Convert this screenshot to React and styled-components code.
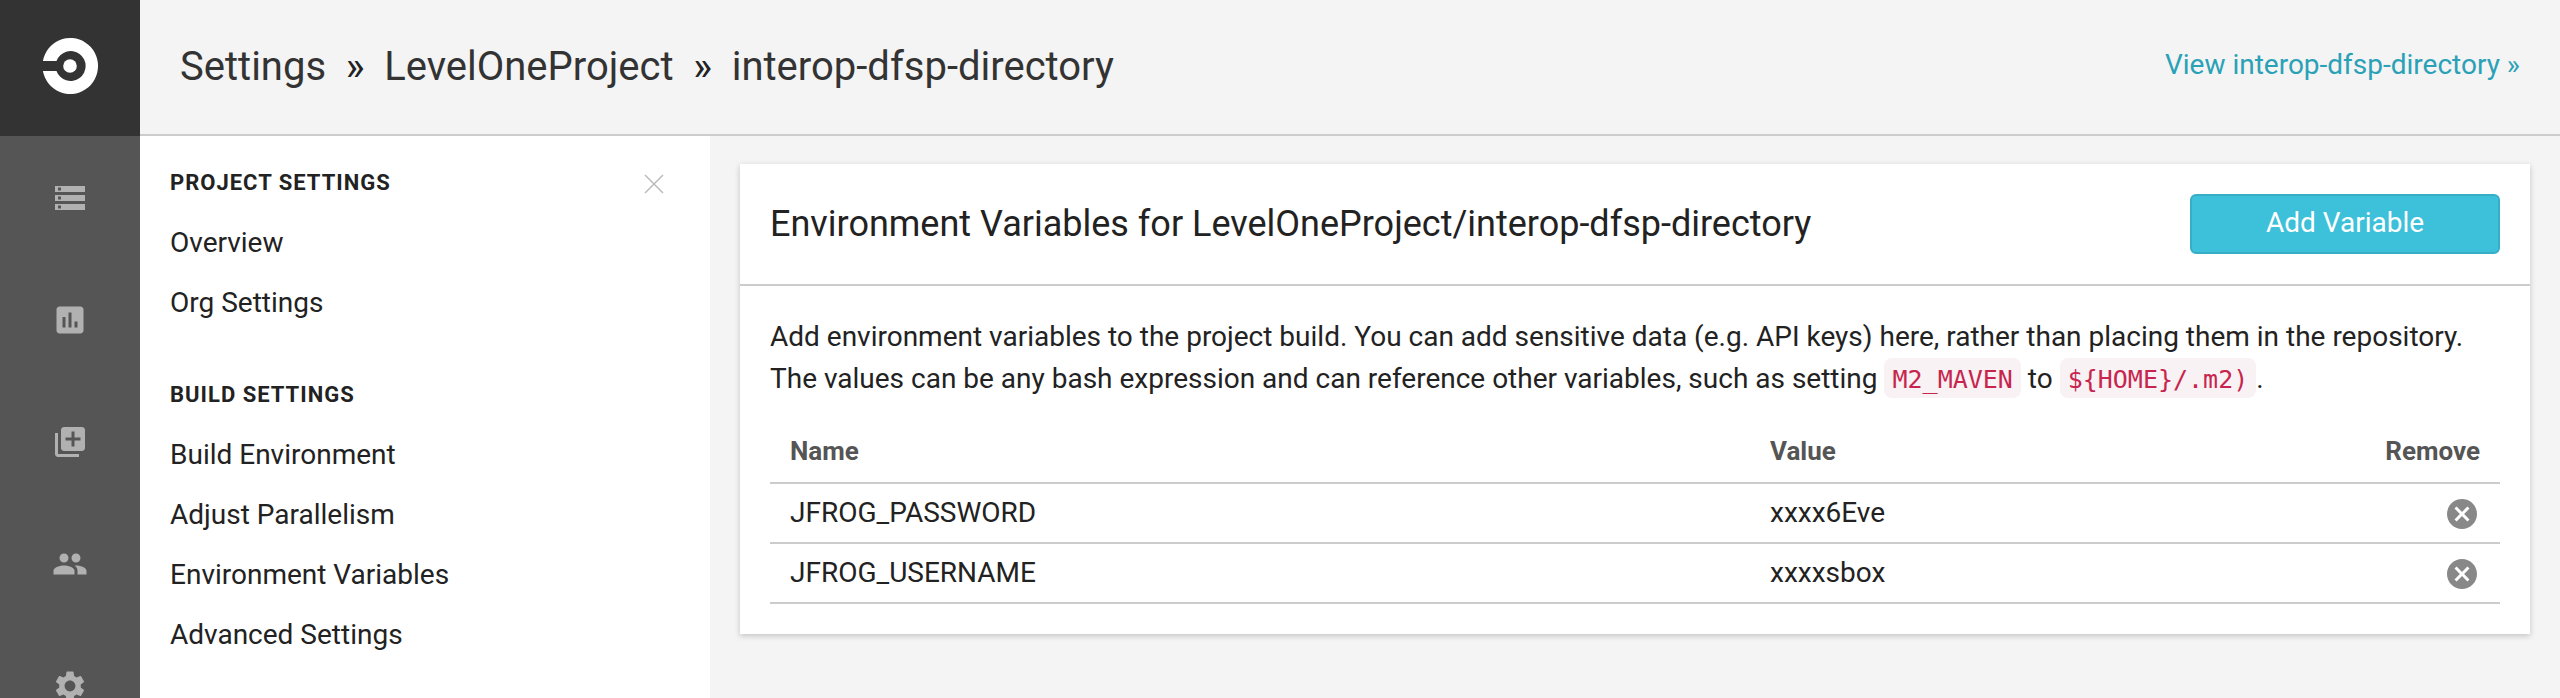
import React from "react";
import styled, { createGlobalStyle } from "styled-components";
import { MdStorage, MdAssessment, MdLibraryAdd, MdPeople, MdSettings, MdCancel } from "react-icons/md";

const GlobalStyle = createGlobalStyle`
  * { box-sizing: border-box; }
  body {
    margin: 0;
    overflow: hidden;
    background: #f4f4f4;
    color: #222;
    font-family: Roboto, "Liberation Sans", sans-serif;
    font-size: 28px;
  }
`;

const Page = styled.div`
  display: flex;
  height: 698px;
  overflow: hidden;
`;

const Rail = styled.nav`
  flex: 0 0 140px;
  height: 100%;
  overflow: hidden;
  background: #555;
`;

const LogoTile = styled.div`
  height: 136px;
  margin-bottom: 1px;
  padding: 36px 0 0 40px;
  background: #333;
`;

const RailItem = styled.a`
  display: flex;
  align-items: center;
  justify-content: center;
  height: 122px;
  color: #b1b1b1;
  font-size: 36px;
`;

const Main = styled.div`
  flex: 1;
  display: flex;
  flex-direction: column;
`;

const Header = styled.header`
  flex: none;
  display: flex;
  align-items: center;
  justify-content: space-between;
  height: 136px;
  padding: 0 40px 4px 40px;
  border-bottom: 2px solid #ccc;
`;

const Breadcrumb = styled.ol`
  display: flex;
  margin: 4px 0 0;
  padding: 0;
  list-style: none;
  font-size: 40px;
  line-height: 56px;
  color: #333;
`;

const Crumb = styled.li`
  & + &::before {
    content: "»";
    padding: 0 19.7px;
    color: #222;
  }
`;

const ViewLink = styled.a`
  margin-bottom: 1px;
  color: #2aa1b7;
`;

const Body = styled.div`
  flex: 1;
  display: flex;
  min-height: 0;
`;

const SettingsNav = styled.aside`
  flex: 0 0 570px;
  display: flex;
  align-items: flex-start;
  justify-content: space-between;
  padding: 31px 46px 0 30px;
  background: #fff;
`;

const NavSection = styled.section`
  & + & {
    margin-top: 46px;
  }
`;

const NavHeading = styled.h2`
  margin: 0;
  font-size: 22px;
  font-weight: 700;
  line-height: 31px;
  letter-spacing: 1px;
  text-transform: uppercase;
  padding-bottom: 15px;
`;

const NavLink = styled.a`
  display: block;
  height: 60px;
  line-height: 60px;
`;

const CloseIcon = styled.svg`
  flex: none;
  margin-top: 7px;
`;

const Content = styled.main`
  flex: 1;
  padding: 28px 30px;
`;

const Card = styled.article`
  height: 470px;
  background: #fff;
  box-shadow: 0 2px 6px rgba(0, 0, 0, 0.2);
`;

const CardHeader = styled.header`
  display: flex;
  align-items: center;
  justify-content: space-between;
  height: 122px;
  padding: 0 30px;
  border-bottom: 2px solid #ccc;
`;

const CardTitle = styled.h1`
  margin: 0;
  font-size: 36px;
  font-weight: 400;
`;

const AddButton = styled.button`
  width: 310px;
  height: 60px;
  padding: 0 0 3px;
  border: 2px solid #36aec6;
  border-radius: 6px;
  background: #3dc0da;
  color: #fff;
  font: inherit;
`;

const CardBody = styled.div`
  padding: 30px 30px 0;
`;

const Description = styled.p`
  margin: 0;
  line-height: 42px;
`;

const Code = styled.code`
  padding: 7px 8px 4px;
  border-radius: 8px;
  background: #f9f2f4;
  color: #c7254e;
  font: 25px "DejaVu Sans Mono", "Liberation Mono", monospace;
`;

const Table = styled.div`
  margin-top: 18px;
`;

const Row = styled.div`
  display: grid;
  grid-template-columns: 980px 1fr auto;
  align-items: center;
  height: 60px;
  padding: 0 20px 1px;
  border-bottom: 2px solid #ccc;
`;

const HeadRow = styled(Row)`
  height: 66px;
  padding: 2px 20px 0;
  color: #555;
  font-size: 26px;
  font-weight: 700;
`;

const RemoveButton = styled.a`
  display: flex;
  margin-top: 3px;
  color: #888;
  font-size: 36px;
`;

const railIcons = [MdStorage, MdAssessment, MdLibraryAdd, MdPeople, MdSettings];

const sections = [
  { title: "Project Settings", links: ["Overview", "Org Settings"] },
  {
    title: "Build Settings",
    links: ["Build Environment", "Adjust Parallelism", "Environment Variables", "Advanced Settings"],
  },
];

const variables = [
  { name: "JFROG_PASSWORD", value: "xxxx6Eve" },
  { name: "JFROG_USERNAME", value: "xxxxsbox" },
];

function Logo() {
  return (
    <svg width="60" height="60" viewBox="0 0 60 60" fill="#fff">
      <circle cx="30" cy="30" r="6.8" />
      <path d="M2.9 25A27.8 28 0 1 1 2.9 35H16.5A15 15 0 1 0 16.5 25Z" />
    </svg>
  );
}

export default function App() {
  return (
    <>
      <GlobalStyle />
      <Page>
        <Rail>
          <LogoTile><Logo /></LogoTile>
          {railIcons.map((Icon, i) => <RailItem key={i}><Icon /></RailItem>)}
        </Rail>
        <Main>
          <Header>
            <Breadcrumb>
              <Crumb>Settings</Crumb>
              <Crumb>LevelOneProject</Crumb>
              <Crumb>interop-dfsp-directory</Crumb>
            </Breadcrumb>
            <ViewLink>View interop-dfsp-directory »</ViewLink>
          </Header>
          <Body>
            <SettingsNav>
              <div>
                {sections.map((s) => (
                  <NavSection key={s.title}>
                    <NavHeading>{s.title}</NavHeading>
                    {s.links.map((l) => <NavLink key={l}>{l}</NavLink>)}
                  </NavSection>
                ))}
              </div>
              <CloseIcon width="20" height="20" viewBox="0 0 20 20" stroke="#bbb" strokeWidth="1.5">
                <path d="M1 1L19 19M19 1L1 19" />
              </CloseIcon>
            </SettingsNav>
            <Content>
              <Card>
                <CardHeader>
                  <CardTitle>Environment Variables for LevelOneProject/interop-dfsp-directory</CardTitle>
                  <AddButton>Add Variable</AddButton>
                </CardHeader>
                <CardBody>
                  <Description>
                    Add environment variables to the project build. You can add sensitive data (e.g. API keys) here,
                    rather than placing them in the repository.
                    <br />
                    The values can be any bash expression and can reference other variables, such as setting{" "}
                    <Code>M2_MAVEN</Code> to <Code>{"${HOME}/.m2)"}</Code>.
                  </Description>
                  <Table>
                    <HeadRow><span>Name</span><span>Value</span><span>Remove</span></HeadRow>
                    {variables.map((v) => (
                      <Row key={v.name}>
                        <span>{v.name}</span>
                        <span>{v.value}</span>
                        <RemoveButton><MdCancel /></RemoveButton>
                      </Row>
                    ))}
                  </Table>
                </CardBody>
              </Card>
            </Content>
          </Body>
        </Main>
      </Page>
    </>
  );
}
